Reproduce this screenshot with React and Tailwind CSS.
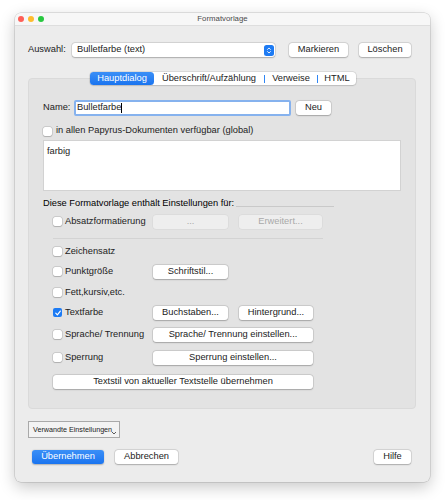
import React from "react";

const Btn = ({ children, className = "", disabled = false }) => (
  <div
    className={`flex h-[14px] shrink-0 items-center justify-center rounded-[3px] ${
      disabled
        ? "bg-[#eeeeee] text-[#a9a9a9] shadow-[0_0_0_0.5px_rgba(0,0,0,0.06)]"
        : "bg-white text-[#222] shadow-[0_0_0_0.5px_rgba(0,0,0,0.14),0_0.5px_1.5px_rgba(0,0,0,0.22)]"
    } ${className}`}
  >
    {children}
  </div>
);

const Check = ({ checked = false }) =>
  checked ? (
    <div className="flex h-[9px] w-[9px] shrink-0 items-center justify-center rounded-[2px] bg-[#1d7bf4]">
      <svg viewBox="0 0 10 10" className="h-[8px] w-[8px]">
        <path d="M2.2 5.2 L4.2 7.3 L7.9 2.6" fill="none" stroke="white" strokeWidth="1.5" strokeLinecap="round" strokeLinejoin="round" />
      </svg>
    </div>
  ) : (
    <div className="h-[9px] w-[9px] shrink-0 rounded-[2px] bg-white shadow-[0_0_0_0.5px_rgba(0,0,0,0.18),0_0.5px_1px_rgba(0,0,0,0.15)]" />
  );

const Row = ({ label, checked, className = "", children }) => (
  <div className={`flex h-[14px] items-center ${className}`}>
    <div className="flex w-[100px] items-center gap-[3px]">
      <Check checked={checked} />
      <span>{label}</span>
    </div>
    {children}
  </div>
);

export default function App() {
  return (
    <div
      className="h-[500px] w-[445px] bg-white pl-[15px] pt-[13px] text-[9.3px] text-[#222] leading-none"
      style={{ fontFamily: '"Liberation Sans", Arial, sans-serif' }}
    >
      <div className="flex h-[469px] w-[415px] flex-col overflow-hidden rounded-[6px] bg-[#ececec] shadow-[0_0_0_0.5px_rgba(0,0,0,0.2),0_5px_16px_rgba(0,0,0,0.22)]">
        {/* title bar */}
        <div className="relative flex h-[13px] items-center justify-center bg-[#f7f7f7] border-b border-[#dedede]">
          <div className="absolute left-[3px] top-[3px] flex gap-[4px]">
            <div className="h-[6px] w-[6px] rounded-full bg-[#fe5f57]" />
            <div className="h-[6px] w-[6px] rounded-full bg-[#febc2e]" />
            <div className="h-[6px] w-[6px] rounded-full bg-[#28c840]" />
          </div>
          <span className="text-[7.8px] text-[#4b4b4b]">Formatvorlage</span>
        </div>

        {/* Auswahl row */}
        <div className="mt-[17px] flex h-[14px] items-center pl-[13px]">
          <span className="w-[44px]">Auswahl:</span>
          <div className="flex h-[14px] w-[203px] items-center justify-between rounded-[3px] bg-white pl-[5px] shadow-[0_0_0_0.5px_rgba(0,0,0,0.14),0_0.5px_1.5px_rgba(0,0,0,0.22)]">
            <span>Bulletfarbe (text)</span>
            <div className="mr-[1px] flex h-[11px] w-[10px] items-center justify-center rounded-[2.5px] bg-[#1e7bf3]">
              <svg viewBox="0 0 10 12" className="h-[9px] w-[8px]">
                <path d="M3 4.6 L5 2.6 L7 4.6 M3 7.4 L5 9.4 L7 7.4" fill="none" stroke="white" strokeWidth="1.2" strokeLinecap="round" strokeLinejoin="round" />
              </svg>
            </div>
          </div>
          <Btn className="ml-[14px] w-[59px]">Markieren</Btn>
          <Btn className="ml-[11px] w-[52px]">Löschen</Btn>
        </div>

        {/* tabs */}
        <div className="relative z-10 mt-[15px] flex h-[13px] justify-center pl-[1px]">
          <div className="flex h-[13px] items-center rounded-[3.5px] bg-white shadow-[0_0_0_0.5px_rgba(0,0,0,0.12),0_0.5px_1.5px_rgba(0,0,0,0.2)]">
            <div className="flex h-[13px] w-[64px] items-center justify-center rounded-[3.5px] bg-gradient-to-b from-[#3a8ff7] to-[#1a74ef] text-white">
              Hauptdialog
            </div>
            <div className="flex w-[110px] items-center justify-center">Überschrift/Aufzählung</div>
            <div className="h-[8px] w-[1px] bg-[#2f86f4]" />
            <div className="flex w-[52px] items-center justify-center">Verweise</div>
            <div className="h-[8px] w-[1px] bg-[#2f86f4]" />
            <div className="flex w-[38px] items-center justify-center">HTML</div>
          </div>
        </div>

        {/* group box */}
        <div className="-mt-[7px] ml-[13px] flex h-[331px] w-[388px] flex-col rounded-[4px] border border-[#dadada] bg-[#e3e3e3] pl-[14px] pt-[21px]">
          <div className="flex h-[16px] items-center">
            <span className="w-[31px]">Name:</span>
            <div className="flex h-[16px] w-[217px] items-center rounded-[2px] border-[2px] border-[#86b2ee] bg-white pl-[1px]">
              <span>Bulletfarbe</span>
              <div className="h-[10px] w-[1px] bg-black" />
            </div>
            <Btn className="ml-[5px] w-[35px]">Neu</Btn>
          </div>

          <div className="mt-[9px] flex h-[12px] items-center gap-[4px]">
            <Check />
            <span>in allen Papyrus-Dokumenten verfügbar (global)</span>
          </div>

          <div className="mt-[3px] h-[51px] w-[358px] border border-[#d2d2d2] bg-white pl-[3px] pt-[6px]">
            farbig
          </div>

          <div className="mt-[7px] flex h-[12px] items-center">
            <span className="text-black">Diese Formatvorlage enthält Einstellungen für:</span>
            <div className="ml-[2px] mt-[4px] h-[1px] w-[98px] bg-[#c9c9c9]" />
          </div>

          <div className="pl-[10px]">
            <Row label="Absatzformatierung" className="mt-[5px]">
              <Btn disabled className="w-[75px]">...</Btn>
              <Btn disabled className="ml-[11px] w-[83px]">Erweitert...</Btn>
            </Row>
            <div className="mt-[9px] h-[1px] w-[270px] bg-[#d3d3d3]" />
            <Row label="Zeichensatz" className="mt-[6px]" />
            <Row label="Punktgröße" className="mt-[6px]">
              <Btn className="w-[75px]">Schriftstil...</Btn>
            </Row>
            <Row label="Fett,kursiv,etc." className="mt-[7px]" />
            <Row label="Textfarbe" checked className="mt-[6px]">
              <Btn className="w-[75px]">Buchstaben...</Btn>
              <Btn className="ml-[11px] w-[74px]">Hintergrund...</Btn>
            </Row>
            <Row label="Sprache/ Trennung" className="mt-[8px]">
              <Btn className="w-[160px]">Sprache/ Trennung einstellen...</Btn>
            </Row>
            <Row label="Sperrung" className="mt-[9px]">
              <Btn className="w-[160px]">Sperrung einstellen...</Btn>
            </Row>
            <Btn className="mt-[10px] w-[260px]">Textstil von aktueller Textstelle übernehmen</Btn>
          </div>
        </div>

        {/* Verwandte Einstellungen */}
        <div className="relative ml-[13px] mt-[12px] flex h-[17px] w-[92px] items-center border border-[#a9a9a9] bg-[#f3f3f3] pl-[4px] text-[7.2px]">
          Verwandte Einstellungen
          <svg viewBox="0 0 8 6" className="absolute bottom-[2px] right-[2px] h-[4px] w-[6px]">
            <path d="M1 1.5 L4 4.5 L7 1.5" fill="none" stroke="#222" strokeWidth="1.1" />
          </svg>
        </div>

        {/* bottom buttons */}
        <div className="mt-[12px] flex h-[14px] items-center pl-[17px] pr-[19px]">
          <div className="flex h-[14px] w-[72px] items-center justify-center rounded-[3px] bg-gradient-to-b from-[#3a8ff7] to-[#1a74ef] text-white shadow-[0_0.5px_1.5px_rgba(0,0,0,0.25)]">
            Übernehmen
          </div>
          <Btn className="ml-[11px] w-[63px]">Abbrechen</Btn>
          <div className="flex-1" />
          <Btn className="w-[37px]">Hilfe</Btn>
        </div>
      </div>
    </div>
  );
}
